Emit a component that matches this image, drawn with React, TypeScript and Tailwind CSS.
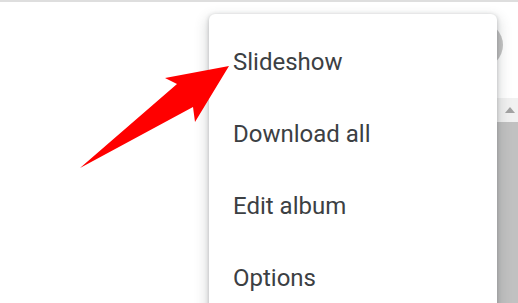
import React from "react";

export default function App() {
  const items = ["Slideshow", "Download all", "Edit album", "Options"];
  return (
    <div
      className="relative w-[518px] h-[303px] overflow-hidden bg-white flex flex-col"
      style={{ fontFamily: "Roboto, 'Liberation Sans', sans-serif" }}
    >
      <div className="h-[2px] bg-[#dedede] shrink-0" />
      <div className="h-[96px] shrink-0 flex justify-end items-start pt-[20px] pr-[15px]">
        <div className="w-[46px] h-[46px] rounded-full bg-[#c4c4c4]" />
      </div>
      <div className="flex-1 flex">
        <div className="flex-1" />
        <div className="w-[21px] flex flex-col">
          <div className="h-[24px] bg-[#f1f1f1] flex items-center justify-center pl-[4px]">
            <svg width="10" height="6" viewBox="0 0 10 6">
              <polygon points="5,0 10,6 0,6" fill="#a3a3a3" />
            </svg>
          </div>
          <div className="flex-1 bg-[#c1c1c1]" />
        </div>
      </div>

      <div className="absolute left-[209px] top-[14px] w-[288px] h-[320px] rounded-[6px] bg-white py-[12px] shadow-[0_6px_12px_4px_rgba(60,64,67,0.15),0_1.5px_4.5px_rgba(60,64,67,0.3)]">
        {items.map((t) => (
          <div
            key={t}
            className="h-[72px] px-[24px] flex items-center text-[24px] text-[#3c4043] leading-none"
          >
            {t}
          </div>
        ))}
      </div>

      <svg
        className="absolute left-0 top-0 pointer-events-none"
        width="518"
        height="303"
        viewBox="0 0 518 303"
      >
        <polygon
          points="229,66 165,78 177,84 80,168 193,107 195,122"
          fill="#ff0000"
        />
      </svg>
    </div>
  );
}
